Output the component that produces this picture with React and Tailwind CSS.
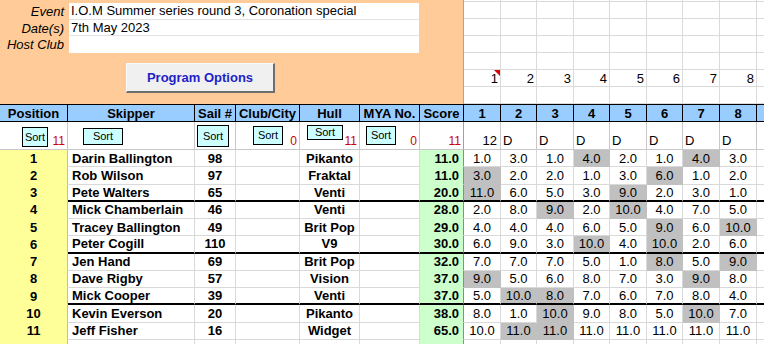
const font = "font-['Liberation_Sans',Arial,sans-serif]";
const tableCols =
    "grid-cols-[68px_127px_41px_64px_60px_60px_44px_37px_36px_37px_36px_37px_36px_37px_37px_1fr]";
const roundCols = "grid-cols-[37px_36px_37px_36px_37px_36px_37px_37px_1fr]";

const headers = ["Position", "Skipper", "Sail #", "Club/City", "Hull", "MYA No.", "Score", "1", "2", "3", "4", "5", "6", "7", "8", ""];

// "*" marks a discarded race, shown with the grey fill
const results = [
    [1, "Darin Ballington", 98, "Pikanto", "11.0", ["1.0", "3.0", "1.0", "4.0*", "2.0", "1.0", "4.0*", "3.0"]],
    [2, "Rob Wilson", 97, "Fraktal", "11.0", ["3.0*", "2.0", "2.0", "1.0", "3.0", "6.0*", "1.0", "2.0"]],
    [3, "Pete Walters", 65, "Venti", "20.0", ["11.0*", "6.0", "5.0", "3.0", "9.0*", "2.0", "3.0", "1.0"]],
    [4, "Mick Chamberlain", 46, "Venti", "28.0", ["2.0", "8.0", "9.0*", "2.0", "10.0*", "4.0", "7.0", "5.0"]],
    [5, "Tracey Ballington", 49, "Brit Pop", "29.0", ["4.0", "4.0", "4.0", "6.0", "5.0", "9.0*", "6.0", "10.0*"]],
    [6, "Peter Cogill", 110, "V9", "30.0", ["6.0", "9.0", "3.0", "10.0*", "4.0", "10.0*", "2.0", "6.0"]],
    [7, "Jen Hand", 69, "Brit Pop", "32.0", ["7.0", "7.0", "7.0", "5.0", "1.0", "8.0*", "5.0", "9.0*"]],
    [8, "Dave Rigby", 57, "Vision", "37.0", ["9.0*", "5.0", "6.0", "8.0", "7.0", "3.0", "9.0*", "8.0"]],
    [9, "Mick Cooper", 39, "Venti", "37.0", ["5.0", "10.0*", "8.0*", "7.0", "6.0", "7.0", "8.0", "4.0"]],
    [10, "Kevin Everson", 20, "Pikanto", "38.0", ["8.0", "1.0", "10.0*", "9.0", "8.0", "5.0", "10.0*", "7.0"]],
    [11, "Jeff Fisher", 16, "Widget", "65.0", ["10.0", "11.0*", "11.0*", "11.0", "11.0", "11.0", "11.0", "11.0"]],
];

const sortCells = [
    { btn: "left-[22px] top-[5px] h-[20px] w-[26px]", red: "11" },
    { btn: "left-[15px] top-[6px] h-[17px] w-[40px]" },
    { btn: "left-[2px] top-[3px] h-[22px] w-[32px]" },
    { btn: "left-[17px] top-[4px] h-[19px] w-[30px]", red: "0" },
    { btn: "left-[7px] top-[3px] h-[15px] w-[36px]", red: "11" },
    { btn: "left-[6px] top-[4px] h-[19px] w-[30px]", red: "0" },
    { red: "11" },
];

function TopArea() {
    const labels = ["Event", "Date(s)", "Host Club"];
    const values = ["I.O.M Summer series round 3, Coronation special", "7th May 2023", ""];
    const rowHeights = ["h-[2px]", "h-[17px]", "h-[17px]", "h-[17px]", "h-[17px]", "h-[17px]", "h-[17px]"];

    return (
        <div className="flex h-[104px]">
            <div className="flex w-[464px] shrink-0 flex-col border-r border-[#a6a6a6] bg-[#FFCC99]">
                <div className="flex pt-[3px]">
                    <div className="flex w-[69px] flex-col pr-[5px] italic">
                        {labels.map((label) => (
                            <div key={label} className="flex h-[16.7px] items-center justify-end">
                                {label}
                            </div>
                        ))}
                    </div>
                    <div className="flex w-[350px] flex-col bg-white">
                        {values.map((value, i) => (
                            <div
                                key={i}
                                className={`flex h-[16.7px] items-center pl-[2px] ${i < 2 ? "border-b border-[#e2e2e2]" : ""}`}
                            >
                                {value}
                            </div>
                        ))}
                    </div>
                </div>
                <button className="ml-[126px] mt-[10px] flex h-[30px] w-[149px] items-center justify-center border border-t-[#f8f8f8] border-l-[#f8f8f8] border-r-2 border-b-2 border-r-[#6e6e6e] border-b-[#6e6e6e] bg-[#f0f0f0] text-[13px] font-bold text-[#1f1fc6]">
                    Program Options
                </button>
            </div>

            <div className={`grid flex-1 ${roundCols}`}>
                {rowHeights.map((h, r) =>
                    Array.from({ length: 9 }).map((_, c) => (
                        <div
                            key={`${r}-${c}`}
                            className={`relative flex items-center justify-end border-b border-[#dadada] pr-[2px] ${h} ${c < 8 ? "border-r" : ""}`}
                        >
                            {r === 5 && c < 8 ? c + 1 : null}
                            {r === 5 && c === 0 && (
                                <svg className="absolute right-0 top-0" width="6" height="6" viewBox="0 0 6 6">
                                    <polygon points="0,0 6,0 6,6" fill="#e00000" />
                                </svg>
                            )}
                        </div>
                    ))
                )}
            </div>
        </div>
    );
}

function HeaderRow() {
    return (
        <div className={`grid h-[18px] ${tableCols} border-y border-black bg-[#99CCFF] font-bold`}>
            {headers.map((h, i) => (
                <div
                    key={i}
                    className={`flex items-center justify-center ${i < 15 ? "border-r border-black" : ""}`}
                >
                    {h}
                </div>
            ))}
        </div>
    );
}

function SortRow() {
    return (
        <div className={`grid h-[28px] ${tableCols}`}>
            {headers.map((_, i) => {
                const cell = sortCells[i];
                return (
                    <div
                        key={i}
                        className={`relative flex items-end border-b border-[#c8c8c8] pb-[2px] ${i < 15 ? "border-r" : ""} ${i === 6 ? "border-r-[#a0a0a0]" : ""} ${i === 7 ? "justify-end pr-[3px]" : "pl-[2px]"}`}
                    >
                        {cell?.btn && (
                            <div
                                className={`absolute flex items-center justify-center border border-black bg-[#CCFFFF] text-[11px] ${cell.btn}`}
                            >
                                Sort
                            </div>
                        )}
                        {cell?.red && (
                            <span className="ml-auto pr-[2px] text-[12px] text-[#cc0000]">{cell.red}</span>
                        )}
                        {i === 7 && "12"}
                        {i > 7 && i < 15 && "D"}
                    </div>
                );
            })}
        </div>
    );
}

function DataRow({ row, thick }) {
    const [pos, skipper, sail, hull, score, races] = row || ["", "", "", "", "", Array(8).fill("")];
    const bottom = thick ? "border-b-2 border-b-black" : "border-b";

    const cells = [
        <div key="p" className="flex items-center justify-center border-r border-b border-[#FFFF99] border-r-[#bdbdbd] bg-[#FFFF99] font-bold">
            {pos}
        </div>,
        <div key="s" className={`flex items-center border-r border-[#d9d9d9] pl-[4px] font-bold ${bottom}`}>
            {skipper}
        </div>,
        <div key="n" className={`flex items-center justify-center border-r border-[#d9d9d9] font-bold ${bottom}`}>
            {sail}
        </div>,
        <div key="c" className={`border-r border-[#d9d9d9] ${bottom}`} />,
        <div key="h" className={`flex items-center justify-center border-r border-[#d9d9d9] font-bold ${bottom}`}>
            {hull}
        </div>,
        <div key="m" className={`border-r border-[#d9d9d9] ${bottom}`} />,
        <div key="sc" className={`flex items-center justify-end border-r border-[#CCFFCC] border-r-[#8c8c8c] bg-[#CCFFCC] pr-[4px] font-bold ${bottom}`}>
            {score}
        </div>,
        ...races.map((r, i) => {
            const dropped = r.endsWith("*");
            return (
                <div
                    key={`r${i}`}
                    className={`flex items-center justify-center border-r ${bottom} ${dropped ? "border-[#C0C0C0] bg-[#C0C0C0]" : "border-[#d9d9d9]"}`}
                >
                    {r.replace("*", "")}
                </div>
            );
        }),
        <div key="x" className={`border-[#d9d9d9] ${bottom}`} />,
    ];

    return <div className={`grid h-[17.25px] ${tableCols}`}>{cells}</div>;
}

export default function App() {
    return (
        <div className={`h-[344px] w-[764px] overflow-hidden bg-white text-[13px] leading-none text-black ${font}`}>
            <TopArea />
            <HeaderRow />
            <SortRow />
            {results.map((row, i) => (
                <DataRow key={i} row={row} thick={i === 2 || i === 5 || i === 8} />
            ))}
            <DataRow row={null} />
        </div>
    );
}
